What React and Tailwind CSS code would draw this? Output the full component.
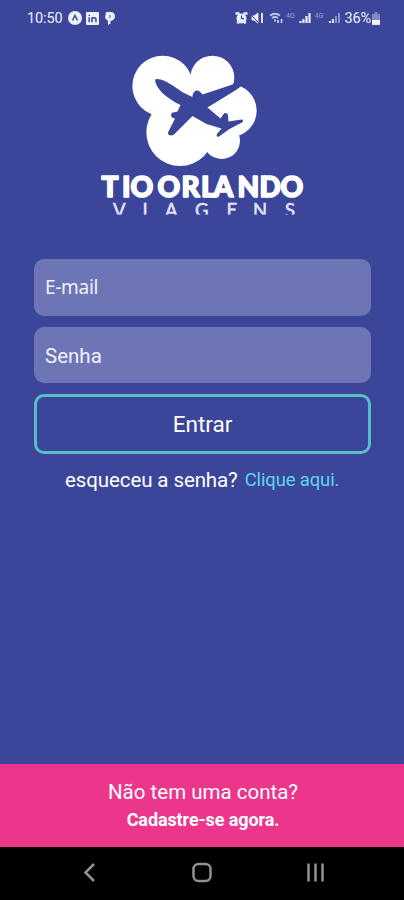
import { useState } from 'react'

function Logo() {
  return (
    <svg className="h-[180px] w-[220px]" viewBox="90 45 220 180" role="img" aria-label="Tio Orlando Viagens">
      <g transform="translate(120 45) scale(0.33333)" fill="#fff">
        <circle cx="128" cy="123" r="91" />
        <circle cx="277" cy="98" r="66" />
        <circle cx="331" cy="197" r="79" />
        <circle cx="180" cy="262" r="101" />
        <circle cx="305" cy="287" r="55" />
        <path d="M100 110h180v170H100z" />
      </g>
      <path
        fill="#3b469b"
        d="M155 79.500C158 77.500 166 81 172 85L183 92.500L192.500 97C192.500 92.500 195 90 198 90.500C200 91 201 93 202.500 94.500L232.500 84.500L235 82V74L246 80L241 86.200L236 90L207.500 107.500L220.500 118.500L224 113.500C225.500 112.500 228 113.500 228 115.500L228.500 121.500L241.500 119.500C243.500 119.500 243.500 121.500 242 122.500L229.500 129L219 136.500C217 137.500 216 136 217 134L221.500 128.500L206.500 124L192.500 116L174.500 134C172 136.500 167.500 135.500 168 132.500L175 118.500C171.500 118.500 170 115.500 172 112.800L177.500 111.500L180.500 105C167 98.500 155.500 89 155 79.500Z"
      />
      <text
        x="101.500 122 130.500 150 157.500 181.500 201 213.500 237.500 259.500 280.500"
        y="196.500"
        fill="#fff"
        stroke="#fff"
        strokeWidth="1.600"
        strokeLinejoin="round"
        fontFamily="Lato, sans-serif"
        fontWeight="900"
        fontSize="28"
      >
        TIO ORLANDO
      </text>
      <clipPath id="tagline">
        <path d="M90 199h220v15.500H90z" />
      </clipPath>
      <text
        clipPath="url(#tagline)"
        x="113 142.500 165 195 226.500 253 285"
        y="217"
        fill="#e4e7fa"
        stroke="#e4e7fa"
        strokeWidth="0.5"
        fontFamily="Lato, sans-serif"
        fontSize="18.500"
      >
        VIAGENS
      </text>
    </svg>
  )
}

function StatusBar() {
  return (
    <div className="flex h-9 items-center justify-between pl-[27px] pr-[24px] text-[#eef0ff]">
      <div className="flex items-center gap-[5px]">
        <span className="pt-px text-[14.5px] tracking-[-0.1px]">10:50</span>
        <svg className="h-[14px] w-[14px]" viewBox="0 0 14 14">
          <circle cx="7" cy="7" r="7" fill="currentColor" />
          <path d="M4.500 9.500L7 4.500l2.500 5" fill="none" stroke="#3b469b" strokeWidth="1.5" />
        </svg>
        <svg className="-ml-px h-[13px] w-[13px]" viewBox="0 0 13 13">
          <rect width="13" height="13" rx="1" fill="currentColor" />
          <path d="M3.200 5.300v5M6 10.300v-5M6 7.500c0-2.300 4-2.300 4 0v2.800M3.200 2.700v1.300" fill="none" stroke="#3b469b" strokeWidth="1.500" />
        </svg>
        <svg className="ml-px h-[13px] w-[10px]" viewBox="0 0 10 13">
          <path d="M1 0h4.500C8.500 0 10 2 10 4.300S8 9 5.500 9v2.500L3 13V9L0 6z" fill="currentColor" />
          <path d="M5 3v3" stroke="#3b469b" strokeWidth="1" />
        </svg>
      </div>
      <div className="flex items-center">
        <svg className="h-4 w-[108px]" viewBox="232 10 108 16" fill="none" stroke="currentColor">
          <circle cx="239.500" cy="18.500" r="5" fill="currentColor" stroke="none" />
          <path d="M233.500 13.500h4M241.500 13.500h4M235.500 23.500l1.500-2M243.500 23.500l-1.500-2" strokeWidth="2.500" />
          <path d="M239.500 15.500v3.200h2.500" stroke="#3b469b" strokeWidth="1.200" />
          <path d="M250 16h2l4-3v10l-4-3h-2z" fill="currentColor" strokeWidth="0.8" />
          <path d="M249 15l7 7" stroke="#3b469b" strokeWidth="1" />
          <path d="M260 13v10" strokeWidth="1.800" />
          <path d="M268 15.500q5-3.500 10 0M270 18q3-2 6 0M272 20.500h2" strokeWidth="1.800" opacity="0.75" />
          <path d="M276 23v-3M279.500 23v-4" strokeWidth="1.500" opacity="0.9" />
          <g fill="currentColor" stroke="none" opacity="0.5" fontFamily="Roboto, sans-serif" fontSize="7">
            <text x="284" y="17.500">4G</text>
            <text x="312.500" y="17.500">4G</text>
          </g>
          <path d="M298.500 23v-2M301.500 23v-4M304.500 23v-7M307.500 23v-10" strokeWidth="2.200" />
          <path d="M328 23v-2M331 23v-4" strokeWidth="2.200" opacity="0.9" />
          <path d="M334 23v-7M337 23v-10" strokeWidth="2" opacity="0.45" />
        </svg>
        <span className="pt-px pl-[2px] text-[14.5px] tracking-[-0.1px]">36%</span>
        <svg className="ml-[1px] h-[13px] w-[8px]" viewBox="0 0 8 13" fill="currentColor">
          <path d="M2.500 0h3v2H8v6H0V2h2.500z" opacity="0.4" />
          <path d="M0 8h8v4a1 1 0 01-1 1H1a1 1 0 01-1-1z" />
        </svg>
      </div>
    </div>
  )
}

function NavBar() {
  return (
    <nav className="flex h-[53px] items-center justify-center bg-black pb-[3px]">
      <svg className="h-6 w-[244px]" viewBox="80 860 244 24" fill="none" stroke="#929292" strokeWidth="2.500">
        <path d="M94 864l-8.500 8.500L94 881" />
        <rect x="193.500" y="864" width="17" height="17" rx="5" />
        <path d="M308.500 863.500v18M315.500 863.500v18M322.500 863.500v18" />
      </svg>
    </nav>
  )
}

export default function App() {
  const [email, setEmail] = useState('')
  const [password, setPassword] = useState('')

  return (
    <div className="flex h-[900px] w-[404px] flex-col overflow-hidden bg-[#3b469b] font-['Roboto',sans-serif] text-white">
      <StatusBar />

      <main className="flex flex-1 flex-col items-center px-[34px] pt-[9px]">
        <div className="-ml-1">
          <Logo />
        </div>

        <form className="mt-[34px] flex w-full flex-col gap-[11px]" onSubmit={(e) => e.preventDefault()}>
          <input
            type="email"
            value={email}
            onChange={(e) => setEmail(e.target.value)}
            placeholder="E-mail"
            className="h-[56.5px] w-[337px] rounded-[10px] bg-[#6d75b5] px-[11px] font-['Noto_Sans',sans-serif] text-[19px] tracking-[-0.3px] placeholder:text-[#f1f2ff]"
          />
          <input
            type="password"
            value={password}
            onChange={(e) => setPassword(e.target.value)}
            placeholder="Senha"
            className="h-[56.5px] w-[337px] rounded-[10px] bg-[#6d75b5] px-[11px] pt-[2px] text-[20.5px] placeholder:text-[#f1f2ff]"
          />
          <button type="submit" className="h-[60px] w-[337px] rounded-[10px] border-3 border-[#57bec2] pt-[2px] text-[22.5px]">
            Entrar
          </button>
        </form>

        <p className="mt-[11px] flex w-full items-center gap-[7px] pl-[31px] whitespace-nowrap">
          <span className="text-[20.5px] tracking-[-0.1px]">esqueceu a senha?</span>
          <a href="#" className="text-[18.5px] tracking-[-0.15px] text-[#5bd5ed]">Clique aqui.</a>
        </p>
      </main>

      <footer className="flex h-[83px] flex-col items-center bg-[#ec368b] pt-[13px] pl-[2px]">
        <span className="text-[20.5px] leading-[30px]">Não tem uma conta?</span>
        <a href="#" className="text-[18px] leading-[26px] font-bold tracking-[-0.1px]">Cadastre-se agora.</a>
      </footer>

      <NavBar />
    </div>
  )
}
